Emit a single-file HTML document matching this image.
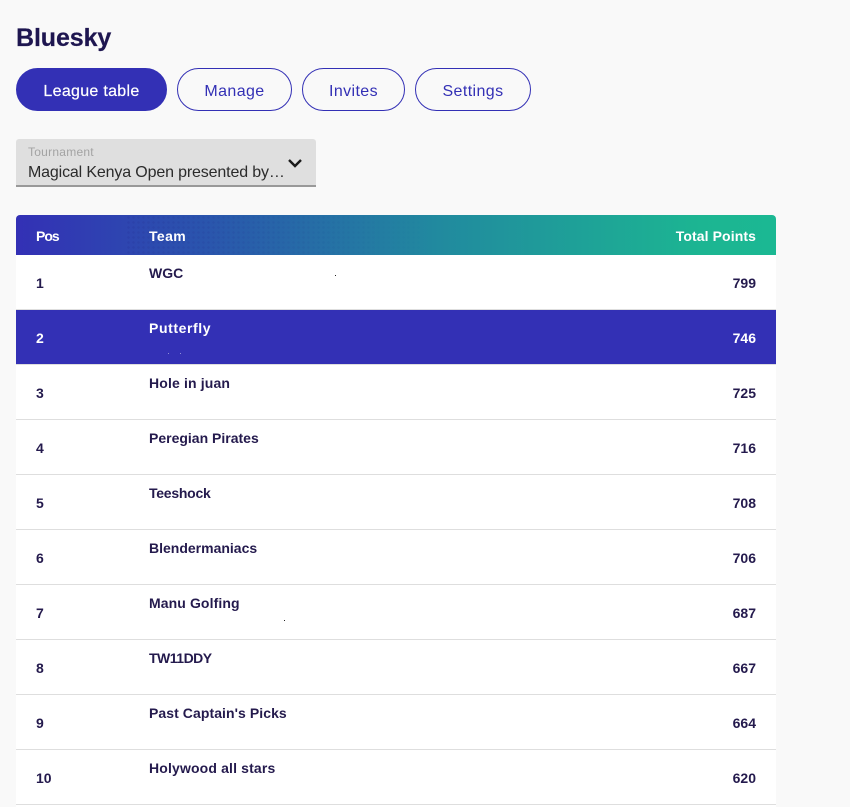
<!DOCTYPE html>
<html><head><meta charset="utf-8">
<style>
html,body{margin:0;padding:0;background:#fff}
#p{position:relative;width:865px;height:807px;overflow:hidden;background:#fff;font-family:"Liberation Sans",sans-serif;color:#1f1545}
#bg{position:absolute;left:0;top:0;width:850px;height:807px;background:#f9f9f9}
.a{position:absolute;white-space:nowrap}
h1{position:absolute;left:16px;top:23px;margin:0;font-size:25px;line-height:30px;font-weight:700;color:#1e1650;letter-spacing:-.1px;-webkit-text-stroke:.2px #1e1650}
.b{position:absolute;top:68px;height:41px;line-height:45px;border:1px solid #3330b5;border-radius:22px;text-align:center;font-size:16px;color:#3330b5;letter-spacing:.4px;background:transparent;box-sizing:content-box}
.b.on{background:#3330b5;color:#fff;-webkit-text-stroke:.2px #fff;letter-spacing:.3px}
#sel{position:absolute;left:16px;top:139px;width:300px;height:46px;background:#dfdfdf;border-bottom:2px solid #999;border-radius:3px 3px 0 0}
#hd{position:absolute;left:16px;top:215px;width:760px;height:40px;border-radius:4px 4px 0 0;background:linear-gradient(90deg,#3330b5 0%,#2a55ad 25%,#21899f 55%,#1cb592 90%,#1bb893 100%);color:#fff;font-weight:700;font-size:14px;letter-spacing:.1px}
#dots{position:absolute;left:110px;top:0;width:300px;height:40px;background-image:radial-gradient(circle,rgba(40,40,140,.16) 1.2px,transparent 1.4px);background-size:5px 5px;-webkit-mask-image:linear-gradient(90deg,#000,transparent)}
.r{position:absolute;left:16px;width:760px;height:54px;background:#fff;border-bottom:1px solid #dedede;font-weight:700;font-size:14px;color:#241a4d}
.r.me{background:#3330b5;color:#fff;border-bottom-color:#dedede}
.p{position:absolute;left:20px;top:20px;line-height:16px}
.t{position:absolute;left:133px;top:10px;line-height:16px}
.s{position:absolute;right:20px;top:20px;line-height:16px}
</style></head><body>
<div id="p"><div id="bg"></div>
<h1>Bluesky</h1>
<div class="b on" style="left:16px;width:149px">League table</div>
<div class="b" style="left:177px;width:113px">Manage</div>
<div class="b" style="left:302px;width:101px">Invites</div>
<div class="b" style="left:415px;width:114px">Settings</div>
<div id="sel">
<div class="a" style="left:12px;top:6px;font-size:12px;line-height:14px;color:#a3a3a3;letter-spacing:.25px">Tournament</div>
<div class="a" style="left:12px;top:24px;font-size:16px;line-height:20px;color:#2b2b2b;letter-spacing:-.15px">Magical Kenya Open presented by…</div>
<svg class="a" style="left:271px;top:18px" width="16" height="12" viewBox="0 0 16 12"><path d="M2 3l6 6 6-6" fill="none" stroke="#1a1a1a" stroke-width="2.4"/></svg>
</div>
<div id="hd"><div id="dots"></div>
<div class="a" style="left:20px;top:13px;line-height:16px;letter-spacing:-1px">Pos</div>
<div class="a" style="left:133px;top:13px;line-height:16px;letter-spacing:.4px">Team</div>
<div class="a" style="right:20px;top:13px;line-height:16px">Total Points</div>
</div>
<div class="r" style="top:255px"><span class="p">1</span><span class="t">WGC</span><span class="s">799</span></div>
<div class="r me" style="top:310px"><span class="p">2</span><span class="t" style="letter-spacing:.6px">Putterfly</span><span class="s">746</span></div>
<div class="r" style="top:365px"><span class="p">3</span><span class="t" style="letter-spacing:.15px">Hole in juan</span><span class="s">725</span></div>
<div class="r" style="top:420px"><span class="p">4</span><span class="t">Peregian Pirates</span><span class="s">716</span></div>
<div class="r" style="top:475px"><span class="p">5</span><span class="t" style="letter-spacing:-.25px">Teeshock</span><span class="s">708</span></div>
<div class="r" style="top:530px"><span class="p">6</span><span class="t">Blendermaniacs</span><span class="s">706</span></div>
<div class="r" style="top:585px"><span class="p">7</span><span class="t" style="letter-spacing:.1px">Manu Golfing</span><span class="s">687</span></div>
<div class="r" style="top:640px"><span class="p">8</span><span class="t" style="letter-spacing:-.5px">TW11DDY</span><span class="s">667</span></div>
<div class="r" style="top:695px"><span class="p">9</span><span class="t" style="letter-spacing:.07px">Past Captain's Picks</span><span class="s">664</span></div>
<div class="r" style="top:750px"><span class="p">10</span><span class="t" style="letter-spacing:.15px">Holywood all stars</span><span class="s">620</span></div>
<div class="a" style="left:16px;top:805px;width:760px;height:2px;background:#fff"></div>
<div class="a" style="left:335px;top:275px;width:1px;height:1px;background:#222"></div>
<div class="a" style="left:284px;top:620px;width:1px;height:1px;background:#222"></div>
<div class="a" style="left:168px;top:353px;width:1px;height:1px;background:#8f8dd8"></div>
<div class="a" style="left:180px;top:353px;width:1px;height:1px;background:#8f8dd8"></div>
</div>
</body></html>
